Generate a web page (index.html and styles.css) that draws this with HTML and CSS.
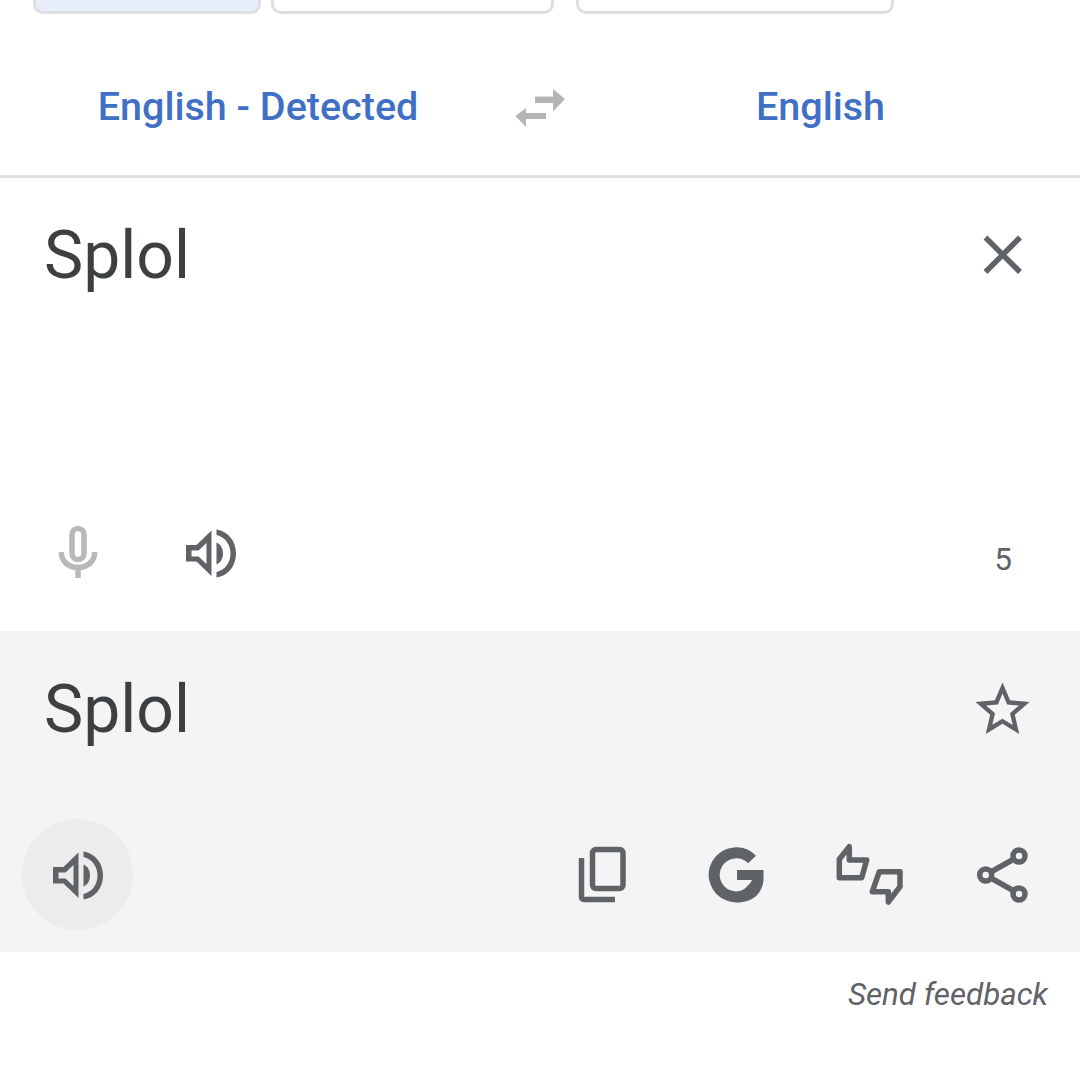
FILE: index.html
```html
<!DOCTYPE html>
<html lang="en">
<head>
    <meta charset="UTF-8">
    <meta name="viewport" content="width=device-width, initial-scale=1.0">
    <title>Translate</title>
    <link rel="stylesheet" href="styles.css">
</head>
<body>
    <svg class="icon-defs" width="0" height="0">
        <symbol id="speaker" viewBox="0 0 60 60">
            <path fill-rule="evenodd" d="M5 22H15.5L30.5 7.500V53L15.500 38.500H5ZM10.500 27.500V33.500H17.500L25.500 41V20L17.500 27.500Z"/>
            <path d="M35.500 6.500C47 8 55 18 55 30.500C55 43 47 53 35.500 54.500V49C44 47 49.500 39.500 49.500 30.500C49.500 21.500 44 14 35.500 12Z"/>
            <path d="M35.500 19.500C39.500 21 42 25.500 42 30.500C42 35.500 39.500 40 35.500 41.500Z"/>
        </symbol>
    </svg>

    <div class="tabs">
        <div class="tab tab-active tab-first"></div>
        <div class="tab tab-second"></div>
        <div class="tab tab-third"></div>
    </div>

    <div class="lang-row">
        <div class="lang">English - Detected</div>
        <svg class="swap" width="60" height="48" viewBox="0 0 60 48">
            <path d="M25 12.500H43V5L55 15L43 27.500V19H25Z"/>
            <path d="M36 29H16V24L5.500 32L16 43V35H36Z"/>
        </svg>
        <div class="lang lang-target">English</div>
    </div>

    <section class="source">
        <div class="text-row">
            <div class="big-text">Splol</div>
            <button class="icon-btn" type="button">
                <svg class="line-icon close-icon" width="60" height="60" viewBox="0 0 60 60">
                    <path d="M12.500 12.500L47 47M47 12.500L12.500 47"/>
                </svg>
            </button>
        </div>
        <div class="tool-row">
            <button class="icon-btn" type="button">
                <svg class="mic" width="60" height="60" viewBox="0 0 60 60">
                    <rect x="24" y="5.500" width="12" height="31" rx="6"/>
                    <path d="M13.300 29C13.300 38 20 44.500 30 44.500C40 44.500 46.700 38 46.700 29"/>
                    <path d="M30 44V55"/>
                </svg>
            </button>
            <button class="icon-btn" type="button">
                <svg class="fill-icon" width="60" height="60"><use href="#speaker"/></svg>
            </button>
            <div class="count">5</div>
        </div>
    </section>

    <section class="result">
        <div class="text-row">
            <div class="big-text">Splol</div>
            <button class="icon-btn" type="button">
                <svg class="fill-icon" width="65" height="65" viewBox="0 0 24 24">
                    <path d="M22 9.24l-7.19-.62L12 2 9.19 8.63 2 9.24l5.46 4.73L5.82 21 12 17.27 18.18 21l-1.63-7.03L22 9.24zM12 15.4l-3.76 2.27 1-4.28-3.32-2.88 4.38-.38L12 6.1l1.71 4.04 4.38.38-3.32 2.88 1 4.28L12 15.4z"/>
                </svg>
            </button>
        </div>
        <div class="tool-row">
            <button class="icon-btn icon-btn-round" type="button">
                <svg class="fill-icon" width="60" height="60"><use href="#speaker"/></svg>
            </button>
            <div class="tool-right">
                <button class="icon-btn" type="button">
                    <svg class="line-icon" width="60" height="60" viewBox="0 0 60 60">
                        <rect x="18.500" y="4.500" width="30.500" height="39" rx="3.500"/>
                        <path d="M7.500 13V52C7.500 53.500 8.500 54.500 10 54.500H41"/>
                    </svg>
                </button>
                <button class="icon-btn" type="button">
                    <svg class="g-icon" width="60" height="60" viewBox="0 0 60 60">
                        <path class="g-arc" d="M45 14.500A22 22 0 1 0 51 33"/>
                        <rect class="g-bar" x="30" y="25" width="26.500" height="10"/>
                        <path class="g-bar" d="M46 35H56.500C55.500 46 48 57.500 30 57.500V52Z"/>
                    </svg>
                </button>
                <button class="icon-btn" type="button">
                    <svg class="line-icon line-join" width="72" height="72" viewBox="0 0 72 72">
                        <path d="M15.300 7.700V21H32.700L27.700 38.700H5.300V20.300Z"/>
                        <path d="M45.300 32.700H66V47.700L54.300 63V52.700H38.300Z"/>
                    </svg>
                </button>
                <button class="icon-btn" type="button">
                    <svg class="line-icon" width="60" height="60" viewBox="0 0 60 60">
                        <circle cx="46" cy="11" r="6"/>
                        <circle cx="12.700" cy="30" r="6"/>
                        <circle cx="46" cy="49" r="6"/>
                        <path d="M17.800 27L41 14M17.800 33L41 46"/>
                    </svg>
                </button>
            </div>
        </div>
    </section>

    <div class="feedback">Send feedback</div>
</body>
</html>
```

FILE: styles.css
```css
* {
    box-sizing: border-box;
}
body {
    margin: 0;
    background-color: #fff;
    font-family: Roboto, "Noto Sans", sans-serif;
    overflow: hidden;
}
.icon-defs {
    display: block;
    height: 0;
}
.tabs {
    display: flex;
    height: 14px;
    align-items: flex-end;
    padding-left: 33px;
    overflow: hidden;
}
.tab {
    flex: none;
    height: 40px;
    border: 3px solid #dedfe2;
    border-radius: 10px;
    background-color: #fff;
}
.tab-first {
    width: 228px;
    margin-right: 10px;
}
.tab-second {
    width: 283px;
    margin-right: 22px;
}
.tab-third {
    width: 318px;
}
.tab-active {
    background-color: #e8edfb;
}
.lang-row {
    display: grid;
    grid-template-columns: 1fr 48px 1fr;
    align-items: center;
    height: 164px;
    padding-top: 27px;
    border-bottom: 3px solid #e0e0e0;
}
.lang {
    margin-top: -4px;
    text-align: center;
    font-size: 39.500px;
    font-weight: 500;
    color: #3f70c6;
}
.lang-target {
    padding-right: 3px;
}
.swap {
    justify-self: center;
    fill: #b5b5b5;
}
.source {
    display: flex;
    flex-direction: column;
    justify-content: space-between;
    height: 453px;
    padding: 22px 22px 23px;
}
.result {
    display: flex;
    flex-direction: column;
    justify-content: space-between;
    height: 321px;
    padding: 23px 22px 22px;
    background-color: #f4f4f5;
}
.text-row,
.tool-row {
    display: flex;
    align-items: center;
    justify-content: space-between;
}
.big-text {
    padding-left: 22px;
    font-size: 66px;
    color: #3c4043;
}
.icon-btn {
    display: flex;
    flex: none;
    align-items: center;
    justify-content: center;
    width: 111px;
    height: 111px;
    padding: 0;
    border: none;
    background: none;
}
.icon-btn-round {
    border-radius: 50%;
    background-color: #ececed;
}
.tool-row .icon-btn + .icon-btn {
    margin-left: 22px;
}
.tool-row .count {
    margin-left: auto;
    margin-right: 46px;
    padding-top: 14px;
    font-size: 31.500px;
    color: #5f6368;
}
.tool-right {
    display: flex;
}
.fill-icon {
    fill: #5f6368;
}
.line-icon {
    fill: none;
    stroke: #5f6368;
    stroke-width: 5.500px;
}
.close-icon {
    margin-bottom: 1px;
}
.line-join {
    stroke-linejoin: round;
}
.mic {
    fill: none;
    stroke: #b8b9bb;
    stroke-width: 5.500px;
}
.g-arc {
    fill: none;
    stroke: #5f6368;
    stroke-width: 11px;
}
.g-bar {
    fill: #5f6368;
}
.feedback {
    padding: 24px 32px 0 0;
    text-align: right;
    font-size: 31.300px;
    font-style: italic;
    color: #5f6368;
}
```
